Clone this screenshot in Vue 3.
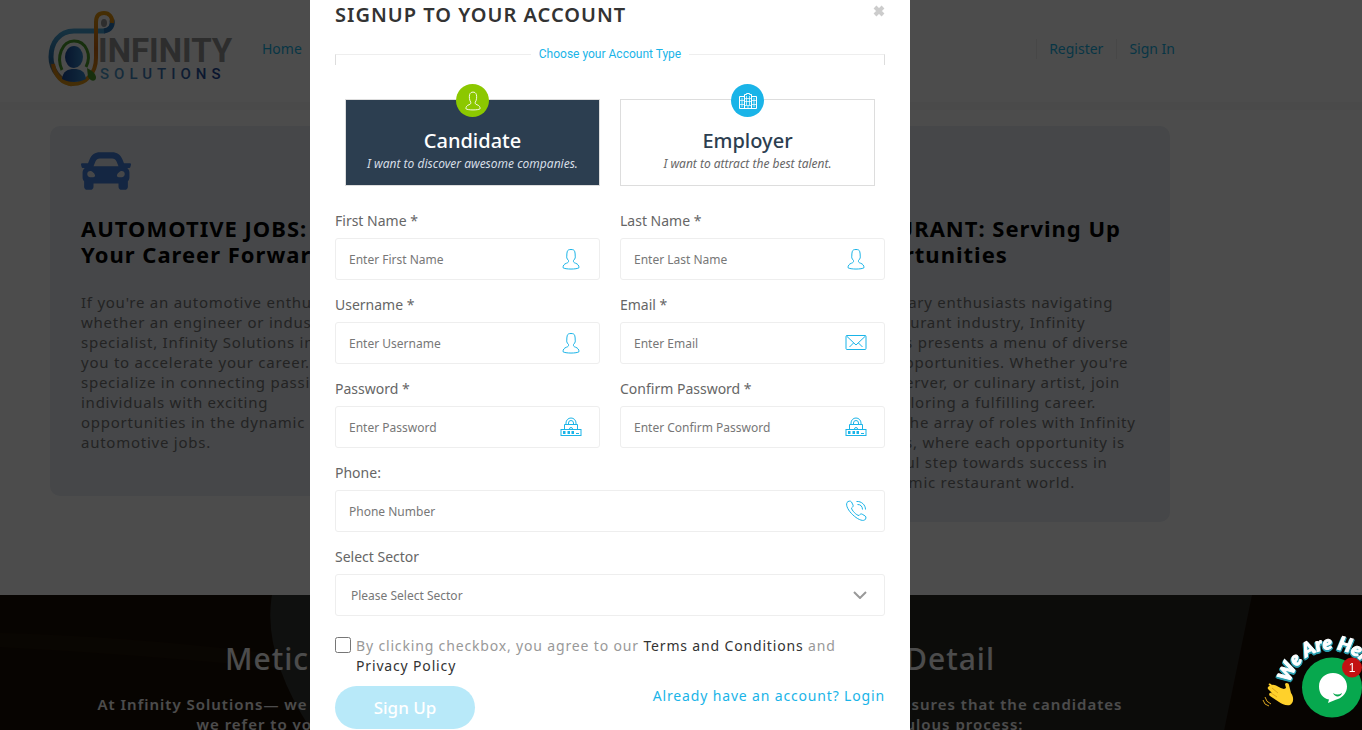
<script setup>
import { reactive, ref } from 'vue';

const accountType = ref('candidate');
const agreed = ref(false);

const form = reactive({
  firstName: '',
  lastName: '',
  username: '',
  email: '',
  password: '',
  confirmPassword: '',
  phone: '',
  sector: '',
});

const accountTypes = [
  { id: 'candidate', title: 'Candidate', text: 'I want to discover awesome companies.' },
  { id: 'employer', title: 'Employer', text: 'I want to attract the best talent.' },
];

const fields = [
  { key: 'firstName', label: 'First Name *', placeholder: 'Enter First Name', type: 'text', icon: 'user' },
  { key: 'lastName', label: 'Last Name *', placeholder: 'Enter Last Name', type: 'text', icon: 'user' },
  { key: 'username', label: 'Username *', placeholder: 'Enter Username', type: 'text', icon: 'user' },
  { key: 'email', label: 'Email *', placeholder: 'Enter Email', type: 'email', icon: 'mail' },
  { key: 'password', label: 'Password *', placeholder: 'Enter Password', type: 'password', icon: 'lock' },
  { key: 'confirmPassword', label: 'Confirm Password *', placeholder: 'Enter Confirm Password', type: 'password', icon: 'lock' },
  { key: 'phone', label: 'Phone:', placeholder: 'Phone Number', type: 'tel', icon: 'phone', wide: true },
];
</script>

<template>
  <div class="page">
    <header class="header">
      <div class="header-inner">
        <a href="#" class="logo" aria-label="Infinity Solutions">
          <svg width="184" height="80" viewBox="46 9 184 80">
            <defs>
              <linearGradient id="ring" x1="0" y1="0" x2="0" y2="1">
                <stop offset="0" stop-color="#4aa6d8" />
                <stop offset="0.55" stop-color="#2a6ea8" />
                <stop offset="1" stop-color="#e08a1a" />
              </linearGradient>
              <linearGradient id="loop" x1="0" y1="0" x2="0" y2="1">
                <stop offset="0" stop-color="#e89a10" />
                <stop offset="0.5" stop-color="#d06a12" />
                <stop offset="1" stop-color="#e39a18" />
              </linearGradient>
              <linearGradient id="person" x1="0" y1="0" x2="1" y2="0">
                <stop offset="0" stop-color="#1a4a9a" />
                <stop offset="1" stop-color="#3a8ed0" />
              </linearGradient>
              <linearGradient id="word" x1="0" y1="0" x2="1" y2="0">
                <stop offset="0" stop-color="#56a3d0" />
                <stop offset="1" stop-color="#1c3f94" />
              </linearGradient>
            </defs>
            <path d="M105 31H74C59 31 51 43 51 57c0 13 9 24 21 27" fill="none" stroke="url(#ring)" stroke-width="5" />
            <path d="M104 31c7-1 9-6 8-11" fill="none" stroke="#2b76b8" stroke-width="5" />
            <path d="M112 23c1-6-3-10-8-10-6 0-8 4-8 9v36c0 15-10 26-23 26-11 0-18-8-20-20" fill="none" stroke="url(#loop)" stroke-width="4" />
            <ellipse cx="104" cy="23" rx="3" ry="4" fill="#999" />
            <path d="M62 70c-6-13 0-29 12-29s18 14 12 26" fill="none" stroke="#4e9f2e" stroke-width="3" />
            <path d="M87 68l5 3c4 3 5 7 3 9s-5 0-7-3z" fill="#4e9f2e" />
            <ellipse cx="74" cy="57" rx="9" ry="11" fill="url(#person)" />
            <path d="M62 79c1-8 6-10 12-10s11 2 12 10c-7 4-17 4-24 0z" fill="url(#person)" />
            <text x="98" y="62" class="logo-name">INFINITY</text>
            <text x="100" y="79" class="logo-sub" fill="url(#word)">SOLUTIONS</text>
          </svg>
        </a>
        <a href="#" class="nav-link">Home</a>
        <nav class="account-links">
          <a href="#" class="nav-link">Register</a>
          <a href="#" class="nav-link">Sign In</a>
        </nav>
      </div>
    </header>

    <main class="cards">
      <article class="card">
        <svg class="card-icon" viewBox="0 0 512 512">
          <path d="M499.99 176h-59.87l-16.64-41.6C406.38 91.63 365.57 64 319.5 64h-127c-46.06 0-86.88 27.63-103.99 70.4L71.87 176H12.01C4.2 176-1.53 183.34.37 190.91l6 24C7.7 220.25 12.5 224 18.01 224h20.07C24.65 235.73 16 252.78 16 272v48c0 16.12 6.16 30.67 16 41.93V416c0 17.67 14.33 32 32 32h32c17.67 0 32-14.33 32-32v-32h256v32c0 17.67 14.33 32 32 32h32c17.67 0 32-14.33 32-32v-54.07c9.84-11.25 16-25.8 16-41.93v-48c0-19.22-8.65-36.27-22.07-48H494c5.51 0 10.31-3.75 11.64-9.09l6-24c1.89-7.57-3.84-14.91-11.65-14.91zm-352.06-17.83c7.29-18.22 24.94-30.17 44.57-30.17h127c19.63 0 37.28 11.95 44.57 30.17L384 208H128l19.93-49.83zM96 319.8c-19.2 0-32-12.76-32-31.9S76.8 256 96 256s48 28.71 48 47.85-28.8 15.95-48 15.95zm320 0c-19.2 0-48 3.19-48-15.95S396.8 256 416 256s32 12.76 32 31.9-12.8 31.9-32 31.9z" />
        </svg>
        <h2>AUTOMOTIVE JOBS: Drive<br />Your Career Forward</h2>
        <p>
          If you're an automotive enthusiast,<br />whether an engineer or industry<br />specialist, Infinity Solutions invites<br />you
          to accelerate your career. We<br />specialize in connecting passionate<br />individuals with exciting<br />opportunities
          in the dynamic<br />automotive jobs.
        </p>
      </article>
      <article class="card card-last">
        <div class="card-icon"></div>
        <h2>RESTURANT: Serving Up<br />Opportunities</h2>
        <p>
          For culinary enthusiasts navigating<br />the restaurant industry, Infinity<br />Solutions presents a menu of diverse<br />career
          opportunities. Whether you're<br />a chef, server, or culinary artist, join<br />us in exploring a fulfilling career.<br />Explore
          the array of roles with Infinity<br />Solutions, where each opportunity is<br />a flavorful step towards success in<br />the
          dynamic restaurant world.
        </p>
      </article>
    </main>

    <section class="process">
      <svg class="process-art" viewBox="0 0 1362 136" preserveAspectRatio="none">
        <path d="M0 38q150 4 310 26v12q-160-16-310-24z" fill="#211507" />
        <path d="M272 0H1252L1224 136H318Q262 60 272 0z" fill="#2b2923" />
        <path d="M272 0h40v136Q262 60 272 0z" fill="#343733" />
      </svg>
      <div class="process-inner">
        <h2><span>Meticulous Matching</span><span>in Every Detail</span></h2>
        <p><span>At Infinity Solutions— we follow</span><span>process that ensures that the candidates</span></p>
        <p class="second"><span>we refer to you have</span><span>our meticulous process:</span></p>
      </div>
    </section>

    <div class="overlay">
      <div class="overlay-inner">
        <form class="modal" role="dialog" aria-labelledby="modal-title" @submit.prevent>
          <div class="modal-head">
            <h1 id="modal-title">SIGNUP TO YOUR ACCOUNT</h1>
            <button type="button" class="close" aria-label="Close">
              <svg width="12" height="12" viewBox="0 0 12 12">
                <path d="M2 2l8 8M10 2l-8 8" stroke="#ccc" stroke-width="4" />
              </svg>
            </button>
          </div>

          <div class="type-title">
            <span class="rule left"></span>
            <span>Choose your Account Type</span>
            <span class="rule right"></span>
          </div>

          <div class="types">
            <button
              v-for="type in accountTypes"
              :key="type.id"
              type="button"
              class="type"
              :class="[type.id, { active: accountType === type.id }]"
              @click="accountType = type.id"
            >
              <span class="badge">
                <svg v-if="type.id === 'candidate'" width="16" height="20" viewBox="0 0 18 22">
                  <path d="M6.5 12.5C4.8 10 4.6 6 5.2 3.8 5.8 1.8 7.2 1 9 1s3.2.8 3.8 2.8c.6 2.2.4 6.2-1.3 8.7-.3 1.500.5 2.200 2 2.700 2.500.8 3.500 2.500 3.500 4.500-2 1.800-14 1.800-16 0 0-2 1-3.700 3.500-4.500 1.500-.5 2.300-1.200 2-2.700z" />
                </svg>
                <svg v-else width="18" height="18" viewBox="0 0 18 18">
                  <path d="M.5 16.500v-12h5M12.500 4.500h5v12H.5M5.500 16.500v-14h2v-1h3v1h2v14" />
                  <path d="M7.500 4v9M10.500 4v9M6 6.500h6M6 9.500h6M6 13.500h6M9 14v2M3 6v9M15 6v9M1 8.500h4M13 8.500h4M1 12.500h4M13 12.500h4" stroke-opacity="0.7" />
                </svg>
              </span>
              <strong>{{ type.title }}</strong>
              <em>{{ type.text }}</em>
            </button>
          </div>

          <div class="fields">
            <div v-for="field in fields" :key="field.key" class="field" :class="{ wide: field.wide }">
              <label :for="field.key">{{ field.label }}</label>
              <div class="control">
                <input :id="field.key" v-model="form[field.key]" :type="field.type" :placeholder="field.placeholder" />
                <svg v-if="field.icon === 'user'" width="22" height="22" viewBox="0 0 22 22">
                  <path d="M8.5 12.5C6.500 10.500 6.600 9 6.800 8 6.600 7 7 5 7.200 3.800 7.600 1.800 9.200 1.500 11 1.500s3.400.3 3.800 2.300c.2 1.200.6 3.200.4 4.200.2 1 .3 2.500-1.700 4.500-.3 1.500.5 2.200 2 2.700 2.500.8 3.500 2.500 3.500 4.500-2 1.800-14 1.800-16 0 0-2 1-3.700 3.500-4.500 1.500-.5 2.300-1.200 2-2.700z" />
                </svg>
                <svg v-else-if="field.icon === 'mail'" width="22" height="22" viewBox="0 0 22 22">
                  <rect x="1" y="3.500" width="20" height="14" rx="1" />
                  <path d="M1.500 4L11 13l9.500-9M4.500 15l4-4M17.500 15l-4-4" />
                </svg>
                <svg v-else-if="field.icon === 'lock'" width="22" height="22" viewBox="0 0 22 22">
                  <path d="M4.500 13V8.500h13V13M6 8.500V7a5 5 0 0 1 10 0v1.500M8.500 8.500V7a2.500 2.500 0 0 1 5 0v1.500M9.500 13a1.500 1.500 0 0 1 3 0" />
                  <rect x="1" y="13.500" width="20" height="6" />
                  <path d="M3 16.500h2.500M7.500 16.500h2.500M11.500 16.500h2.500" stroke-width="3" />
                  <path d="M16 17.500h3" />
                </svg>
                <svg v-else width="22" height="22" viewBox="0 0 22 22">
                  <path d="M2 2.500c1-1.500 3.500-2 4.500-.5L8 5c.5 1.200-.2 2-1.500 3 0 2 5 7.500 7.500 7.500 1-1.300 2-2 3.200-1.300l3 1.800c1.300 1 .8 3-.5 4C14.500 23-1 9 2 2.500zM11.500 1.500C16.500 1 20.500 5 20.500 9.500M12.500 4.500c3-.2 5 2 5 5" />
                </svg>
              </div>
            </div>

            <div class="field wide">
              <label for="sector">Select Sector</label>
              <div class="control">
                <select id="sector" v-model="form.sector">
                  <option value="">Please Select Sector</option>
                  <option>Automotive</option>
                  <option>Restaurant</option>
                </select>
                <svg class="chevron" width="14" height="8" viewBox="0 0 14 8">
                  <path d="M1 1l6 6 6-6" />
                </svg>
              </div>
            </div>
          </div>

          <div class="terms">
            <input id="terms" v-model="agreed" type="checkbox" />
            <label for="terms">
              By clicking checkbox, you agree to our <a href="#">Terms and Conditions</a> and <a href="#">Privacy Policy</a>
            </label>
          </div>

          <div class="actions">
            <button type="submit" class="submit" :disabled="!agreed">Sign Up</button>
            <a href="#">Already have an account? Login</a>
          </div>
        </form>
      </div>
    </div>

    <button type="button" class="chat" aria-label="Open chat">
      <svg width="102" height="106" viewBox="1260 624 102 106">
        <defs>
          <path id="arc" d="M1290 683a43 43 0 0 1 84 0" />
        </defs>
        <text class="chat-text"><textPath href="#arc">We Are Here!</textPath></text>
        <circle cx="1332" cy="687.5" r="30" fill="#07a84e" />
        <path d="M1333 673c8 0 14 6 14 13.500 0 6-4 10.500-9 12.500-3 1-6 2-10 4l1-3.500c-6-1-10-6-10-13 0-8 6-13.500 14-13.500z" fill="#fff" />
        <path d="M1333 693c3 2 6 2 9 0-1 4-7 5-9 0z" fill="#07a84e" />
        <circle cx="1352" cy="667.500" r="10" fill="#c31212" />
        <text x="1352" y="672" class="chat-count">1</text>
        <path d="M1272 685c3-1 7 3 12 4l2-1-1-4c1-2 4-1 4 1l2 8c3 4 3 10-1 12-4 1-8-1-11-3l-9-6c-2-2 0-4 2-3l-4-4c-1-2 1-3 2-3l-1-1c-1-1 0-3 3 0z" fill="#ffd12b" />
        <path d="M1272 688l6 5M1271 693l6 4" fill="none" stroke="#e0a81c" />
        <path d="M1265 697q1 5 6 7M1263 700q1 5 6 6" fill="none" stroke="#d9a521" />
      </svg>
    </button>
  </div>
</template>

<style>
body {
  overflow: hidden;
  background: #fff;
}
</style>

<style scoped>
.page {
  position: relative;
  height: 100vh;
  overflow: hidden;
  font-family: 'Noto Sans', sans-serif;
}

a {
  color: #1ab4e8;
  text-decoration: none;
}

h1,
h2,
p {
  margin: 0;
}

button {
  padding: 0;
  border: 0;
  background: none;
  font-family: inherit;
  cursor: pointer;
}

.header {
  border-bottom: 8px solid #f7f7f7;
}

.header-inner {
  display: flex;
  align-items: center;
  box-sizing: border-box;
  max-width: 1220px;
  height: 102px;
  padding: 0 45px 4px 46px;
}

.logo {
  display: flex;
  margin-right: 32px;
}

.logo svg {
  overflow: visible;
}

.logo-name {
  fill: #969696;
  font: bold 33px Roboto, sans-serif;
}

.logo-sub {
  font: 500 15px Roboto, sans-serif;
  letter-spacing: 5px;
}

.nav-link {
  font-size: 14px;
  line-height: 20px;
}

.account-links {
  display: flex;
  gap: 13px;
  margin-left: auto;
}

.account-links .nav-link {
  padding-left: 12px;
  border-left: 1px solid #eee;
}

.cards {
  display: grid;
  grid-template-columns: repeat(3, 1fr);
  align-items: start;
  gap: 20px;
  box-sizing: border-box;
  max-width: 1220px;
  height: 485px;
  padding: 16px 50px 0;
}

.card {
  box-sizing: border-box;
  min-height: 370px;
  padding: 20px 0 30px 31px;
  border-radius: 10px;
  background: #e9eef4;
  white-space: nowrap;
}

.card-last {
  grid-column: 3;
}

.card-icon {
  display: block;
  width: 50px;
  height: 50px;
  margin-bottom: 19px;
  fill: #447fdc;
}

.card h2 {
  margin-bottom: 25px;
  color: #000;
  font-size: 22px;
  line-height: 26px;
  letter-spacing: 1px;
}

.card p {
  color: #777;
  font-size: 15px;
  line-height: 20px;
  letter-spacing: 0.05em;
}

.process {
  position: relative;
  height: 136px;
  background: #1a0e05;
  color: #fff;
}

.process-art {
  position: absolute;
  width: 100%;
  height: 100%;
}

.process-inner {
  position: relative;
  display: flex;
  flex-direction: column;
  align-items: center;
  max-width: 1220px;
  padding-top: 44px;
}

.process-inner > * {
  display: flex;
  justify-content: space-between;
  width: 770px;
}

.process h2 {
  margin-bottom: 15px;
  font-size: 30px;
  font-weight: 500;
  line-height: 40px;
  letter-spacing: 1px;
}

.process p {
  width: 1025px;
  font-size: 15px;
  font-weight: 600;
  line-height: 20px;
  letter-spacing: 1px;
}

.process .second {
  width: 827px;
}

.overlay {
  position: fixed;
  inset: 0;
  background: rgba(0, 0, 0, 0.7);
}

.overlay-inner {
  display: flex;
  justify-content: center;
  max-width: 1220px;
  height: 100%;
}

.modal {
  box-sizing: border-box;
  width: 600px;
  padding: 0 25px;
  background: #fff;
}

.modal-head {
  display: flex;
  justify-content: space-between;
  height: 46px;
}

.modal-head h1 {
  color: #333;
  font-size: 20px;
  font-weight: 600;
  line-height: 30px;
  letter-spacing: 1px;
}

.close {
  display: flex;
  align-items: center;
  height: 22px;
}

.type-title {
  display: flex;
  gap: 8px;
  color: #1ab4e8;
  font: 12px/16px Roboto, sans-serif;
}

.rule {
  flex: 1;
  height: 10px;
  margin-top: 8px;
  border-top: 1px solid #eee;
}

.rule.left {
  border-left: 1px solid #ddd;
}

.rule.right {
  border-right: 1px solid #ddd;
}

.types {
  display: grid;
  grid-template-columns: 1fr 1fr;
  gap: 20px;
  padding: 34px 10px 24px;
}

.type {
  position: relative;
  display: flex;
  flex-direction: column;
  align-items: center;
  height: 87px;
  padding-top: 28px;
  border: 1px solid #ddd;
  color: #2c3e50;
}

.type.active {
  background: #2c3e50;
  color: #fff;
}

.badge {
  position: absolute;
  top: -16px;
  display: flex;
  align-items: center;
  justify-content: center;
  width: 33px;
  height: 33px;
  border-radius: 50%;
  background: #1ab4e8;
}

.candidate .badge {
  background: #8cc800;
}

.badge svg {
  fill: none;
  stroke: #fff;
}

.type strong {
  font-size: 20px;
  font-weight: 500;
  line-height: 26px;
}

.type em {
  color: #666;
  font-size: 12px;
  line-height: 20px;
}

.type.active em {
  color: #d5dde5;
}

.fields {
  display: grid;
  grid-template-columns: 1fr 1fr;
  gap: 14px 20px;
}

.field label {
  display: block;
  margin-bottom: 6px;
  color: #666;
  font-size: 14px;
  line-height: 22px;
}

.wide {
  grid-column: span 2;
}

.control {
  position: relative;
  display: flex;
  align-items: center;
}

.control input,
.control select {
  box-sizing: border-box;
  width: 100%;
  height: 42px;
  padding: 0 50px 0 13px;
  border: 1px solid #eee;
  border-radius: 3px;
  appearance: none;
  background: #fff;
  color: #777;
  font-family: inherit;
  font-size: 12px;
}

.control select {
  padding-left: 15px;
}

.control input::placeholder {
  color: #777;
}

.control svg {
  position: absolute;
  right: 18px;
  fill: none;
  stroke: #1ab4e8;
  pointer-events: none;
}

.control .chevron {
  stroke: #999;
  stroke-width: 2;
}

.terms {
  display: flex;
  gap: 5px;
  margin-top: 20px;
  color: #999;
  font-size: 14px;
  line-height: 20px;
  letter-spacing: 0.06em;
}

.terms input {
  flex: none;
  width: 16px;
  height: 16px;
  margin: 1px 0 0;
}

.terms a {
  color: #333;
}

.actions {
  display: flex;
  justify-content: space-between;
  margin-top: 10px;
  font-size: 14px;
  line-height: 20px;
  letter-spacing: 0.06em;
}

.submit {
  width: 140px;
  height: 43px;
  border-radius: 22px;
  background: #1ab4e8;
  color: #fff;
  font-size: 17px;
  font-weight: 500;
}

.submit:disabled {
  background: #b8e9f9;
}

.chat {
  position: fixed;
  right: 0;
  bottom: 0;
  display: flex;
}

.chat-text {
  fill: #fff;
  stroke: #fff;
  stroke-width: 1px;
  font: italic 900 19px Lato, sans-serif;
  filter: drop-shadow(-1px 1px 0 #2a9fb0) drop-shadow(1px 1px 0 #2a9fb0);
}

.chat-count {
  fill: #fff;
  font: 12px 'Liberation Sans', sans-serif;
  text-anchor: middle;
}
</style>
